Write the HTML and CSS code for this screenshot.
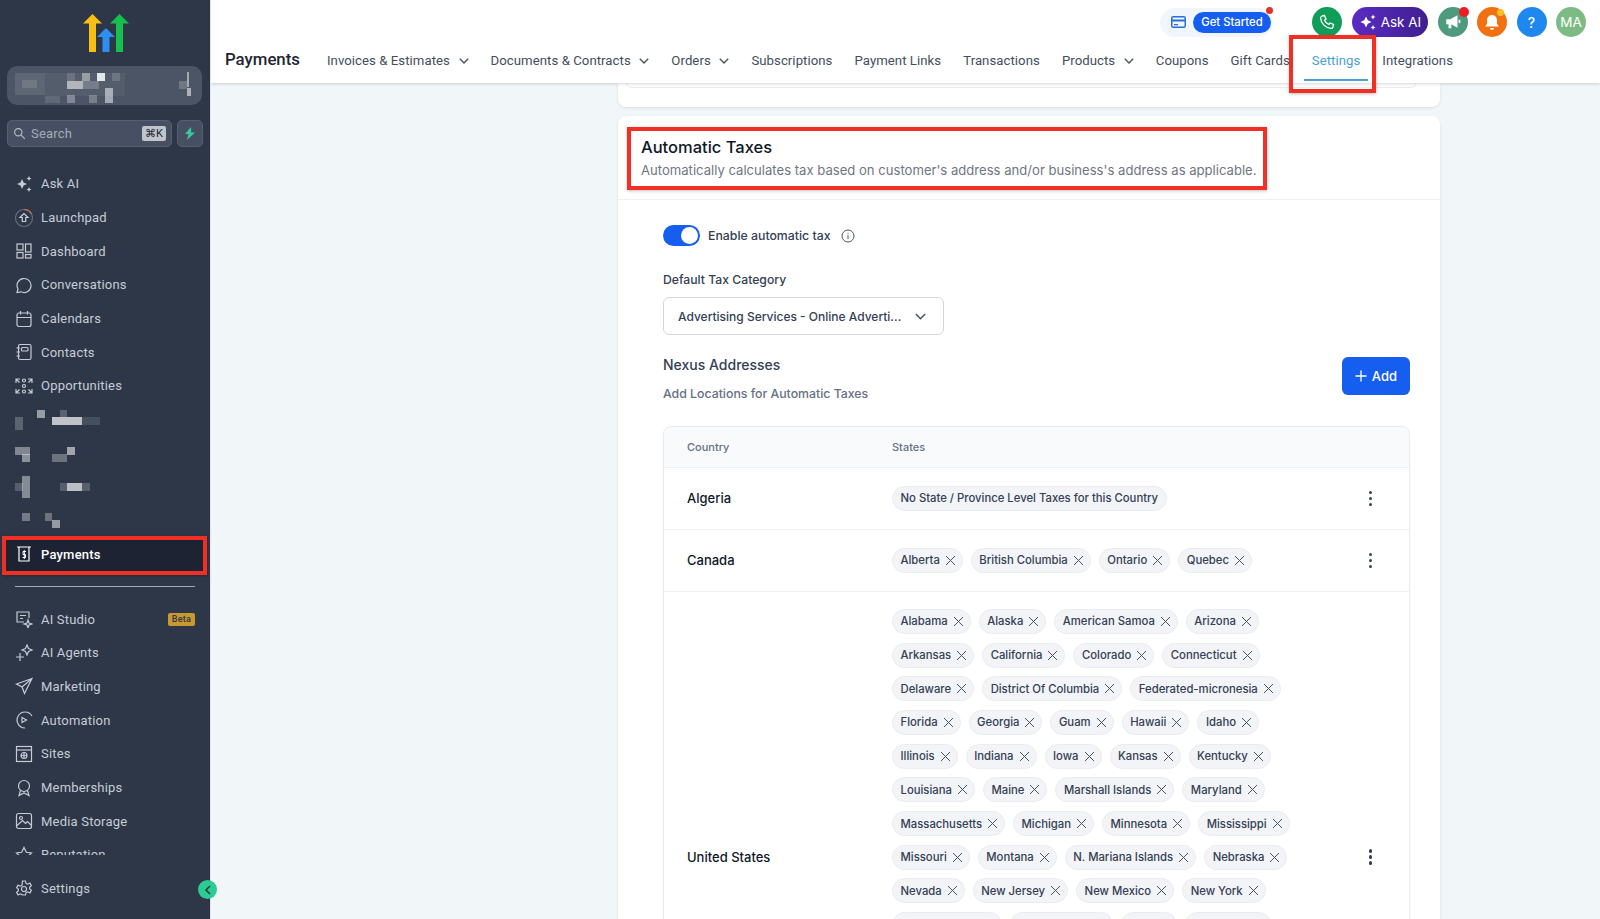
FILE: index.html
```html
<!DOCTYPE html>
<html lang="en">

<head>
  <meta charset="UTF-8">
  <title>Payments - Settings</title>
  <link rel="stylesheet" href="styles.css">
</head>

<body>
  <div class="app">
    <!-- sidebar -->
    <aside class="sidebar">
      <div class="logo">
        <svg width="46" height="38" viewBox="0 0 46 38">
          <polygon fill="#fbbf13" points="0,9.5 9.5,0 19,9.5 13,9.5 13,38 6,38 6,9.5"/>
          <polygon fill="#16c04f" points="27,9.5 36.5,0 46,9.5 40,9.5 40,38 33,38 33,9.5"/>
          <polygon fill="#2d8ff0" points="14,23 23,14 32,23 26.5,23 26.5,38 19.5,38 19.5,23"/>
        </svg>
      </div>

      <div class="account">
        <svg class="pixels" width="195" height="39" viewBox="0 0 195 39">
          <rect x="8" y="7" width="30" height="22" fill="#fff" opacity=".1"/>
          <rect x="15" y="14" width="15" height="8" fill="#fff" opacity=".12"/>
          <rect x="38" y="7" width="80" height="23" fill="#fff" opacity=".05"/>
          <rect x="60" y="7" width="8" height="8" fill="#fff" opacity=".14"/>
          <rect x="60" y="15" width="16" height="8" fill="#fff" opacity=".55"/>
          <rect x="75" y="7" width="8" height="8" fill="#fff" opacity=".4"/>
          <rect x="76" y="15" width="16" height="8" fill="#fff" opacity=".2"/>
          <rect x="90" y="7" width="8" height="8" fill="#fff" opacity=".85"/>
          <rect x="105" y="7" width="8" height="8" fill="#fff" opacity=".15"/>
          <rect x="98" y="22" width="8" height="15" fill="#fff" opacity=".5"/>
          <rect x="60" y="29" width="8" height="8" fill="#fff" opacity=".3"/>
          <rect x="82" y="29" width="8" height="8" fill="#fff" opacity=".25"/>
          <rect x="38" y="30" width="15" height="7" fill="#fff" opacity=".12"/>
          <rect x="172" y="15" width="8" height="8" fill="#fff" opacity=".2"/>
          <rect x="180" y="6" width="2" height="15" fill="#fff" opacity=".5"/>
          <rect x="180" y="22" width="4" height="8" fill="#fff" opacity=".55"/>
        </svg>
      </div>

      <div class="search-row">
        <div class="search">
          <svg class="search-icon" viewBox="0 0 16 16"><circle cx="6.5" cy="6.5" r="4.5"/><path d="M10 10l4.5 4.5"/></svg>
          <span class="search-text">Search</span>
          <span class="kbd">⌘K</span>
        </div>
        <div class="bolt">
          <svg width="12" height="13" viewBox="0 0 12 13"><path fill="#37c99b" d="M7 0L1 7h3.5L3 13l8-7.5H7.2z"/></svg>
        </div>
      </div>

      <ul class="nav">
        <li class="nav-item">
          <svg class="nav-icon filled" viewBox="0 0 18 18"><path d="M7 4l1.6 3.4L12 9 8.6 10.600 7 14l-1.600-3.400L2 9l3.400-1.600z"/><path d="M14 1l.8 1.700 1.700.8-1.700.8L14 6l-.8-1.700-1.700-.8 1.700-.8zM14 12l.8 1.700 1.700.8-1.700.8L14 17l-.8-1.700-1.700-.8 1.700-.8z"/></svg>
          Ask AI
        </li>
        <li class="nav-item">
          <svg class="nav-icon" viewBox="0 0 18 18"><circle class="dim" cx="9" cy="9" r="8.500"/><path class="accent" d="M9 .5a8.500 8.500 0 0 1 7.500 4.500"/><path d="M9 4.500L5 8.500h2.300v4h3.400v-4H13z"/></svg>
          Launchpad
        </li>
        <li class="nav-item">
          <svg class="nav-icon" viewBox="0 0 18 18"><rect x="2" y="2" width="6" height="6"/><rect x="10.500" y="2" width="5.500" height="8"/><rect x="2" y="10.500" width="6" height="5.500"/><rect x="10.500" y="12.500" width="5.500" height="3.500"/></svg>
          Dashboard
        </li>
        <li class="nav-item">
          <svg class="nav-icon" viewBox="0 0 18 18"><path d="M2 16.500l1-3.500a7 7 0 1 1 3 2.800z"/></svg>
          Conversations
        </li>
        <li class="nav-item">
          <svg class="nav-icon" viewBox="0 0 18 18"><rect x="2" y="3" width="14" height="13.500" rx="2"/><path d="M2 7.500h14M5.500 1v3.500M12.500 1v3.500"/></svg>
          Calendars
        </li>
        <li class="nav-item">
          <svg class="nav-icon" viewBox="0 0 18 18"><rect x="3.500" y="1.500" width="12.500" height="15" rx="1.500"/><rect x="6.500" y="4.500" width="6.500" height="3.500" rx="1"/><path d="M1.500 5h3.500M1.500 9h3.500M1.500 13h3.500"/></svg>
          Contacts
        </li>
        <li class="nav-item">
          <svg class="nav-icon" viewBox="0 0 18 18"><circle cx="9" cy="3.500" r="1.500"/><circle cx="9" cy="9" r="1.500"/><circle cx="9" cy="14.500" r="1.500"/><path d="M1 6V2h4M1 2l3.500 3.500M17 6V2h-4M17 2l-3.500 3.500M1 12v4h4M1 16l3.500-3.500M17 12v4h-4M17 16l-3.500-3.500"/></svg>
          Opportunities
        </li>
        <li class="nav-item">
          <svg width="90" height="20" viewBox="0 0 90 20" class="pixel-row">
            <rect x="0" y="7" width="8" height="15" fill="#fff" opacity=".22"/>
            <rect x="22" y="0" width="8" height="8" fill="#fff" opacity=".5"/>
            <rect x="37" y="7" width="30" height="8" fill="#fff" opacity=".7"/>
            <rect x="45" y="0" width="7" height="7" fill="#fff" opacity=".22"/>
            <rect x="67" y="7" width="18" height="8" fill="#fff" opacity=".12"/>
          </svg>
        </li>
        <li class="nav-item">
          <svg width="90" height="20" viewBox="0 0 90 20" class="pixel-row">
            <rect x="0" y="4" width="15" height="8" fill="#fff" opacity=".4"/>
            <rect x="7" y="11" width="8" height="8" fill="#fff" opacity=".45"/>
            <rect x="37" y="11" width="15" height="8" fill="#fff" opacity=".3"/>
            <rect x="52" y="4" width="8" height="8" fill="#fff" opacity=".55"/>
          </svg>
        </li>
        <li class="nav-item">
          <svg width="90" height="24" viewBox="0 0 90 24" class="pixel-row">
            <rect x="0" y="8" width="8" height="8" fill="#fff" opacity=".2"/>
            <rect x="7" y="1" width="8" height="22" fill="#fff" opacity=".42"/>
            <rect x="45" y="8" width="30" height="8" fill="#fff" opacity=".2"/>
            <rect x="52" y="8" width="15" height="8" fill="#fff" opacity=".6"/>
          </svg>
        </li>
        <li class="nav-item">
          <svg width="90" height="20" viewBox="0 0 90 20" class="pixel-row">
            <rect x="7" y="2" width="8" height="8" fill="#fff" opacity=".35"/>
            <rect x="30" y="2" width="7" height="8" fill="#fff" opacity=".3"/>
            <rect x="37" y="9" width="8" height="8" fill="#fff" opacity=".5"/>
          </svg>
        </li>
        <li class="nav-item active">
          <svg class="nav-icon" viewBox="0 0 18 18"><path d="M2 2h14M4 2v14h10V2"/><path class="thin" d="M11 6.500H8v3h2.500v3H7.500M9.300 5v9"/></svg>
          Payments
        </li>
        <li class="nav-divider"></li>
        <li class="nav-item">
          <svg class="nav-icon" viewBox="0 0 18 18"><path d="M9 12H2V2h12v6"/><path d="M5 5.500h6M5 8.500h3"/><path d="M13 10l1 3 3 1-3 1-1 3-1-3-3-1 3-1z"/></svg>
          AI Studio
          <span class="beta">Beta</span>
        </li>
        <li class="nav-item">
          <svg class="nav-icon" viewBox="0 0 18 18"><path d="M12 1l1.500 3.500L17 6l-3.500 1.500L12 11l-1.500-3.500L7 6l3.500-1.500zM5 9v8M1 13h8"/></svg>
          AI Agents
        </li>
        <li class="nav-item">
          <svg class="nav-icon" viewBox="0 0 18 18"><path d="M17 1.500L1.500 7l5.500 3 2.500 6.500zM17 1.500L7 10"/></svg>
          Marketing
        </li>
        <li class="nav-item">
          <svg class="nav-icon" viewBox="0 0 18 18"><path d="M10 17a8 8 0 1 1 7-12"/><path d="M7 6.500v5l4.500-2.500z"/></svg>
          Automation
        </li>
        <li class="nav-item">
          <svg class="nav-icon" viewBox="0 0 18 18"><rect x="1.500" y="1.500" width="15" height="15"/><path d="M1.500 5h15"/><circle cx="9" cy="10.500" r="3"/><path d="M6 10.500h6M9 7.500v6"/></svg>
          Sites
        </li>
        <li class="nav-item">
          <svg class="nav-icon" viewBox="0 0 18 18"><circle cx="9" cy="7" r="5.500"/><path d="M5.500 11.500L4 16.500l5-2.500 5 2.500-1.500-5"/></svg>
          Memberships
        </li>
        <li class="nav-item">
          <svg class="nav-icon" viewBox="0 0 18 18"><rect x="1.500" y="1.500" width="15" height="15" rx="2"/><circle cx="6" cy="6" r="1.500"/><path d="M1.500 14l6-5.500 3 3 2-2 4 4"/></svg>
          Media Storage
        </li>
        <li class="nav-item">
          <svg class="nav-icon" viewBox="0 0 18 18"><path d="M9 1.500l2.300 4.800 5.200.7-3.800 3.600.9 5.200L9 13.300l-4.600 2.500.9-5.200L1.500 7l5.200-.7z"/></svg>
          Reputation
        </li>
      </ul>

      <div class="nav-item nav-bottom">
        <svg class="nav-icon" viewBox="0 0 18 18"><circle cx="9" cy="9" r="2.500"/><path d="M7.500 1h3l.5 2.400 1.700.8 2.200-1.100 1.500 2.600-1.800 1.600v1.400l1.800 1.600-1.500 2.600-2.200-1.100-1.700.8-.5 2.400h-3L7 14.600l-1.700-.8-2.200 1.100-1.500-2.600 1.800-1.600V9.300L1.600 7.700l1.500-2.600 2.200 1.100L7 5.400z"/></svg>
        Settings
      </div>
      <div class="collapse-btn">
        <svg width="8" height="10" viewBox="0 0 8 10"><path d="M6 1L2 5l4 4" fill="none" stroke="#1f3a36" stroke-width="1.500"/></svg>
      </div>
      <div class="mark mark-payments"></div>
    </aside>

    <div class="page">
      <!-- header -->
      <header class="header">
        <div class="topbar">
          <div class="get-started">
            <svg width="15" height="12" viewBox="0 0 15 12"><rect x=".75" y=".75" width="13.500" height="10.500" rx="1.500" fill="none" stroke="#2b6fd8" stroke-width="1.500"/><rect x="1" y="3.500" width="13" height="2" fill="#2b6fd8"/><rect x="3" y="8" width="4" height="1.300" fill="#2b6fd8"/></svg>
            <span class="get-started-btn">Get Started</span>
            <span class="dot-red"></span>
          </div>
          <span class="circle phone">
            <svg width="16" height="16" viewBox="0 0 16 16"><path d="M3 2l2.500-.5L7 5 5.500 6.200a8 8 0 0 0 4.300 4.300L11 9l3.500 1.500L14 13c-.3 1-1.200 1.500-2 1.400C6.500 14 2 9.500 1.600 4c0-.9.500-1.700 1.400-2z" fill="none" stroke="#fff" stroke-width="1.300"/></svg>
          </span>
          <span class="ask-ai">
            <svg width="18" height="18" viewBox="0 0 18 18"><path fill="#fff" d="M7 3.500l1.800 3.700L12.500 9l-3.700 1.800L7 14.500l-1.800-3.700L1.500 9l3.700-1.800zM14 1.500l.8 1.700 1.700.8-1.700.8-.8 1.700-.8-1.700-1.700-.8 1.700-.8zM14 12l.8 1.700 1.700.8-1.700.8-.8 1.700-.8-1.700-1.700-.8 1.700-.8z"/></svg>
            Ask AI
          </span>
          <span class="circle megaphone">
            <svg width="18" height="18" viewBox="0 0 16 16"><path fill="#fff" d="M2 5.500h3.500l6.500-3.500v11L6.500 10v3.500H4V10H2z"/><rect x="13" y="6" width="1.500" height="3" fill="#fff"/></svg>
            <span class="dot-badge"></span>
          </span>
          <span class="circle bell">
            <svg width="16" height="17" viewBox="0 0 16 17"><path fill="#fff" d="M8 1a5 5 0 0 1 5 5v4l2 2.500H1L3 10V6a5 5 0 0 1 5-5zM6 14h4a2 2 0 0 1-4 0z"/></svg>
            <span class="dot-amber"></span>
          </span>
          <span class="circle help">?</span>
          <span class="circle avatar">MA</span>
        </div>
        <div class="tabs-row">
          <h1 class="title">Payments</h1>
          <nav class="tabs">
            <a class="tab">Invoices &amp; Estimates <svg class="caret" viewBox="0 0 10 6"><path d="M.8.8L5 5 9.200.8"/></svg></a>
            <a class="tab">Documents &amp; Contracts <svg class="caret" viewBox="0 0 10 6"><path d="M.8.8L5 5 9.200.8"/></svg></a>
            <a class="tab">Orders <svg class="caret" viewBox="0 0 10 6"><path d="M.8.8L5 5 9.200.8"/></svg></a>
            <a class="tab">Subscriptions</a>
            <a class="tab">Payment Links</a>
            <a class="tab">Transactions</a>
            <a class="tab">Products <svg class="caret" viewBox="0 0 10 6"><path d="M.8.8L5 5 9.200.8"/></svg></a>
            <a class="tab">Coupons</a>
            <a class="tab">Gift Cards</a>
            <a class="tab current">Settings</a>
            <a class="tab">Integrations</a>
          </nav>
        </div>
        <div class="mark mark-settings"></div>
      </header>

      <!-- content -->
      <main class="content">
        <div class="card card-prev">
          <div class="card-prev-inner"></div>
        </div>

        <section class="card">
          <div class="card-head">
            <h2>Automatic Taxes</h2>
            <p>Automatically calculates tax based on customer's address and/or business's address as applicable.</p>
            <div class="mark mark-taxes"></div>
          </div>

          <div class="card-body">
            <div class="toggle-row">
              <span class="toggle"><span class="knob"></span></span>
              <span class="toggle-label">Enable automatic tax</span>
              <svg class="info" viewBox="0 0 14 14"><circle cx="7" cy="7" r="6"/><path d="M7 6.200v4M7 3.800v1"/></svg>
            </div>

            <label class="field-label">Default Tax Category</label>
            <div class="select">
              <span>Advertising Services - Online Adverti...</span>
              <svg class="select-caret" viewBox="0 0 10 6"><path d="M.8.8L5 5 9.200.8"/></svg>
            </div>

            <div class="nexus-head">
              <div>
                <h3>Nexus Addresses</h3>
                <p>Add Locations for Automatic Taxes</p>
              </div>
              <button class="add-btn">
                <svg width="12" height="12" viewBox="0 0 12 12"><path d="M6 .5v11M.5 6h11" stroke="#fff" stroke-width="1.300"/></svg>
                Add
              </button>
            </div>

            <div class="table">
              <div class="table-row table-head">
                <div>Country</div>
                <div>States</div>
                <div></div>
              </div>
              <div class="table-row">
                <div class="country">Algeria</div>
                <div class="chips">
                  <span class="chip">No State / Province Level Taxes for this Country</span>
                </div>
                <div class="kebab"><i></i><i></i><i></i></div>
              </div>
              <div class="table-row">
                <div class="country">Canada</div>
                <div class="chips">
                  <span class="chip x">Alberta</span>
                  <span class="chip x">British Columbia</span>
                  <span class="chip x">Ontario</span>
                  <span class="chip x">Quebec</span>
                </div>
                <div class="kebab"><i></i><i></i><i></i></div>
              </div>
              <div class="table-row row-long">
                <div class="country">United States</div>
                <div class="chips">
                  <span class="chip x">Alabama</span>
                  <span class="chip x">Alaska</span>
                  <span class="chip x">American Samoa</span>
                  <span class="chip x">Arizona</span>
                  <span class="chip x">Arkansas</span>
                  <span class="chip x">California</span>
                  <span class="chip x">Colorado</span>
                  <span class="chip x">Connecticut</span>
                  <span class="chip x">Delaware</span>
                  <span class="chip x">District Of Columbia</span>
                  <span class="chip x">Federated-micronesia</span>
                  <span class="chip x">Florida</span>
                  <span class="chip x">Georgia</span>
                  <span class="chip x">Guam</span>
                  <span class="chip x">Hawaii</span>
                  <span class="chip x">Idaho</span>
                  <span class="chip x">Illinois</span>
                  <span class="chip x">Indiana</span>
                  <span class="chip x">Iowa</span>
                  <span class="chip x">Kansas</span>
                  <span class="chip x">Kentucky</span>
                  <span class="chip x">Louisiana</span>
                  <span class="chip x">Maine</span>
                  <span class="chip x">Marshall Islands</span>
                  <span class="chip x">Maryland</span>
                  <span class="chip x">Massachusetts</span>
                  <span class="chip x">Michigan</span>
                  <span class="chip x">Minnesota</span>
                  <span class="chip x">Mississippi</span>
                  <span class="chip x">Missouri</span>
                  <span class="chip x">Montana</span>
                  <span class="chip x">N. Mariana Islands</span>
                  <span class="chip x">Nebraska</span>
                  <span class="chip x">Nevada</span>
                  <span class="chip x">New Jersey</span>
                  <span class="chip x">New Mexico</span>
                  <span class="chip x">New York</span>
                  <span class="chip x">North Carolina</span>
                  <span class="chip x">North Dakota</span>
                  <span class="chip x">Ohio</span>
                  <span class="chip x">Oklahoma</span>
                  <span class="chip x">Oregon</span>
                  <span class="chip x">Palau</span>
                  <span class="chip x">Pennsylvania</span>
                  <span class="chip x">Puerto Rico</span>
                  <span class="chip x">Rhode Island</span>
                  <span class="chip x">South Carolina</span>
                  <span class="chip x">South Dakota</span>
                  <span class="chip x">Tennessee</span>
                  <span class="chip x">Texas</span>
                  <span class="chip x">Utah</span>
                  <span class="chip x">Vermont</span>
                  <span class="chip x">Virgin Island</span>
                  <span class="chip x">Virginia</span>
                  <span class="chip x">Washington</span>
                  <span class="chip x">West Virginia</span>
                  <span class="chip x">Wisconsin</span>
                  <span class="chip x">Wyoming</span>
                </div>
                <div class="kebab"><i></i><i></i><i></i></div>
              </div>
            </div>
          </div>
        </section>
      </main>
    </div>
  </div>
</body>

</html>
```

FILE: styles.css
```css
* {
  box-sizing: border-box;
}

body {
  margin: 0;
  font-family: Inter, "Liberation Sans", sans-serif;
  background-color: #f1f6f9;
  overflow: hidden;
}

.app {
  display: flex;
  height: 919px;
  overflow: hidden;
}

/* sidebar */
.sidebar {
  position: relative;
  z-index: 5;
  flex: 0 0 210px;
  background-color: #2d3748;
  border-right: 1px solid #dfe4ea;
  color: #c6ccd6;
  font-family: Roboto, "Liberation Sans", sans-serif;
  font-size: 13px;
  font-weight: 400;
  letter-spacing: .2px;
}

.logo {
  display: flex;
  justify-content: center;
  height: 66px;
  padding: 14px 0 0 1px;
}

.account {
  height: 39px;
  margin: 0 8px 0 7px;
  border-radius: 10px;
  background-color: #4b5565;
  overflow: hidden;
}

.pixels {
  display: block;
}

.search-row {
  display: flex;
  gap: 5px;
  margin: 15px 7px 0 7px;
}

.search {
  flex: 1;
  height: 27px;
  display: flex;
  align-items: center;
  padding: 0 5px;
  border: 1px solid #566072;
  border-radius: 5px;
  background-color: #465062;
}

.search-icon {
  width: 13px;
  height: 13px;
  margin-right: 5px;
  fill: none;
  stroke: #b9c0cb;
  stroke-width: 1.4;
}

.search-text {
  flex: 1;
  color: #a3abb8;
}

.kbd {
  padding: 1px 3px;
  border-radius: 2px;
  background-color: #c0c5cd;
  color: #1f2633;
  font-size: 11px;
  line-height: 13px;
}

.bolt {
  width: 26px;
  height: 27px;
  display: flex;
  align-items: center;
  justify-content: center;
  border-radius: 5px;
  border: 1px solid #566072;
  background-color: #465062;
}

.nav {
  list-style-type: none;
  margin: 20px 0 17px 0;
  padding: 0;
  height: 688px;
  overflow: hidden;
}

.nav-item {
  display: flex;
  align-items: center;
  height: 33.7px;
  padding-left: 15px;
  white-space: nowrap;
}

.nav-icon {
  flex: 0 0 18px;
  width: 18px;
  height: 18px;
  margin-right: 8px;
  fill: none;
  stroke: #c6ccd6;
  stroke-width: 1.2;
}

.nav-icon.filled {
  fill: #c6ccd6;
  stroke: none;
}

.nav-icon .dim {
  stroke: #5f6979;
}

.nav-icon .accent {
  stroke: #c8794a;
}

.nav-icon .thin {
  stroke-width: 1;
}

.pixel-row {
  display: block;
}

.nav-item.active {
  margin: 0 6px 0 5px;
  padding-left: 10px;
  background-color: #1e2333;
  color: #fff;
  font-weight: 500;
}

.nav-item.active .nav-icon {
  stroke: #fff;
}

.nav-divider {
  height: 1.5px;
  margin: 14.5px 15px 15px 15px;
  background-color: #a2a9b5;
}

.beta {
  margin-left: auto;
  margin-right: 15px;
  padding: 0 4px;
  border-radius: 2px;
  background-color: #c9992f;
  color: #2d3748;
  font-size: 9px;
  font-weight: 500;
  line-height: 13px;
}

.collapse-btn {
  position: absolute;
  left: 198px;
  top: 880px;
  width: 19px;
  height: 19px;
  display: flex;
  align-items: center;
  justify-content: center;
  border-radius: 50%;
  background-color: #2bcb92;
}

/* header */
.page {
  flex: 1;
  min-width: 0;
  display: flex;
  flex-direction: column;
}

.header {
  position: relative;
  z-index: 3;
  flex: 0 0 83px;
  background-color: #fff;
  box-shadow: 0 1px 3px rgba(0, 0, 0, .16);
}

.topbar {
  display: flex;
  align-items: center;
  justify-content: flex-end;
  height: 44px;
  padding-right: 14px;
  gap: 9.5px;
}

.get-started {
  position: relative;
  display: flex;
  align-items: center;
  gap: 7px;
  width: 113px;
  height: 29px;
  margin-right: 29.5px;
  padding-left: 11px;
  border-radius: 15px;
  background-color: #f1f6fd;
}

.get-started-btn {
  padding: 0 8px;
  border-radius: 11px;
  background-color: #155eef;
  color: #fff;
  font-size: 11.3px;
  font-weight: 500;
  line-height: 21px;
  white-space: nowrap;
}

.dot-red {
  position: absolute;
  right: 0;
  top: -1px;
  width: 7px;
  height: 7px;
  border-radius: 50%;
  background-color: #e0352b;
}

.circle {
  position: relative;
  flex: 0 0 30px;
  width: 30px;
  height: 30px;
  display: flex;
  align-items: center;
  justify-content: center;
  border-radius: 50%;
  color: #fff;
  font-size: 14px;
}

.phone {
  background-color: #0f9d58;
}

.megaphone {
  background-color: #4e9a7e;
}

.bell {
  background-color: #f2700f;
}

.help {
  background-color: #1e88f0;
  font-weight: 500;
}

.avatar {
  background-color: #7dbb85;
  font-size: 13.5px;
}

.dot-badge {
  position: absolute;
  right: -1px;
  top: 0;
  width: 10px;
  height: 10px;
  border-radius: 50%;
  background-color: #ef1c25;
}

.dot-amber {
  position: absolute;
  right: 3px;
  top: 2px;
  width: 7px;
  height: 7px;
  border-radius: 50%;
  background-color: #fbbf24;
}

.ask-ai {
  display: flex;
  align-items: center;
  gap: 4px;
  height: 30px;
  padding: 0 7px;
  border-radius: 15px;
  background: linear-gradient(90deg, #5b2bc4, #3e1f8f);
  color: #fff;
  font-size: 13.4px;
  white-space: nowrap;
}

.tabs-row {
  display: flex;
  align-items: center;
  height: 39px;
  padding: 0 0 6px 14px;
}

.title {
  margin: 0 27px 4px 0;
  color: #1f2633;
  font-family: Roboto, "Liberation Sans", sans-serif;
  font-size: 16.8px;
  font-weight: 500;
}

.tabs {
  display: flex;
  align-items: center;
  gap: 22px;
  font-family: Roboto, "Liberation Sans", sans-serif;
  font-size: 13.2px;
  font-weight: 400;
  letter-spacing: .05px;
  color: #444e5d;
  white-space: nowrap;
}

.tab {
  display: flex;
  align-items: center;
  gap: 8.6px;
}

.tab.current {
  color: #4a9fd4;
}

.caret,
.select-caret {
  width: 10px;
  height: 6px;
  fill: none;
  stroke: #4a5463;
  stroke-width: 1.4;
}

/* red review boxes over the screenshot */
.mark {
  position: absolute;
  border: 4px solid #f03024;
  box-shadow: 0 1px 3px rgba(0, 0, 0, .25);
  pointer-events: none;
}

.mark-settings {
  left: 1078px;
  top: 35px;
  width: 87px;
  height: 58px;
}

.mark-taxes {
  left: 9px;
  top: 11px;
  width: 640px;
  height: 63px;
}

.mark-payments {
  left: 2px;
  top: 536px;
  width: 205px;
  height: 39px;
}

.tab.current::after {
  content: "";
  position: absolute;
  left: 1093px;
  top: 78.5px;
  width: 64px;
  height: 2px;
  background-color: #4a9fd4;
}

/* content */
.content {
  flex: 1;
  min-height: 0;
  overflow: hidden;
  padding-left: 407px;
}

.card {
  width: 822px;
  background-color: #fff;
  border-radius: 8px;
  box-shadow: 0 1px 3px rgba(0, 0, 0, .1);
}

.card-prev {
  height: 24px;
  padding: 0 24px 0 8px;
  border-radius: 0 0 8px 8px;
  margin-bottom: 9px;
}

.card-prev-inner {
  height: 5px;
  border: 1px solid #e8ebef;
  border-top: none;
  border-radius: 0 0 8px 8px;
}

.card-head {
  position: relative;
  height: 84px;
  padding: 21px 0 0 23px;
  border-bottom: 1px solid #eef0f3;
}

.card-head h2 {
  margin: 0;
  color: #101828;
  font-size: 16.5px;
  font-weight: 500;
  line-height: 20px;
}

.card-head p {
  margin: 4px 0 0 0;
  color: #6f7682;
  font-size: 13.1px;
  line-height: 18px;
}

.card-body {
  padding: 25px 30px 0 45px;
}

.toggle-row {
  display: flex;
  align-items: center;
  height: 21px;
}

.toggle {
  display: flex;
  justify-content: flex-end;
  align-items: center;
  width: 37px;
  height: 21px;
  padding-right: 2px;
  border-radius: 11px;
  background-color: #155eef;
}

.knob {
  width: 17px;
  height: 17px;
  border-radius: 50%;
  background-color: #fff;
}

.toggle-label {
  margin: 0 10px 0 8px;
  color: #344054;
  font-size: 12.3px;
  font-weight: 500;
}

.info {
  width: 14px;
  height: 14px;
  fill: none;
  stroke: #4a5463;
  stroke-width: 1;
}

.field-label {
  display: block;
  margin-top: 24px;
  color: #344054;
  font-size: 12.2px;
  font-weight: 500;
  line-height: 20px;
}

.select {
  display: flex;
  align-items: center;
  justify-content: space-between;
  width: 281px;
  height: 38px;
  margin-top: 7px;
  padding: 0 14px;
  border: 1px solid #d0d5dd;
  border-radius: 6px;
  color: #344054;
  font-size: 12px;
  font-weight: 500;
  white-space: nowrap;
}

.select-caret {
  width: 11px;
  height: 7px;
  margin-right: 3px;
}

.nexus-head {
  display: flex;
  justify-content: space-between;
  align-items: flex-start;
  margin-top: 19.5px;
}

.nexus-head h3 {
  margin: 0;
  color: #344054;
  font-size: 14px;
  font-weight: 500;
  line-height: 20px;
}

.nexus-head p {
  margin: 10px 0 0 0;
  color: #667085;
  font-size: 12.3px;
  font-weight: 500;
  line-height: 18px;
}

.add-btn {
  display: flex;
  align-items: center;
  gap: 5px;
  height: 38px;
  margin-top: 2.5px;
  padding: 0 13px;
  border: none;
  border-radius: 6px;
  background-color: #155eef;
  color: #fff;
  font-family: inherit;
  font-size: 13px;
  font-weight: 500;
}

.table {
  margin-top: 23.4px;
  border: 1px solid #e8ebef;
  border-radius: 8px;
  box-shadow: 0 1px 2px rgba(0, 0, 0, .05);
}

.table-row {
  display: grid;
  grid-template-columns: 228px 425px 1fr;
  align-items: center;
  padding: 18px 0;
  border-top: 1px solid #eef0f3;
}

.table-head {
  height: 40px;
  padding: 0;
  border-top: none;
  border-radius: 8px 8px 0 0;
  background-color: #f9fafb;
  color: #667085;
  font-size: 11px;
  font-weight: 500;
}

.table-head > div:first-child,
.country {
  padding-left: 23px;
}

.country {
  color: #101828;
  font-size: 13px;
  font-weight: 500;
}

.chips {
  display: flex;
  flex-wrap: wrap;
  gap: 8.7px 8px;
}

.row-long {
  padding-top: 17px;
}

.chip {
  display: inline-flex;
  align-items: center;
  height: 25px;
  padding: 0 7.5px;
  border: 1px solid #eaecf0;
  border-radius: 13px;
  background-color: #f2f4f7;
  color: #344054;
  font-size: 11.3px;
  font-weight: 500;
  white-space: nowrap;
}

.chip.x {
  padding-right: 7px;
}

.chip.x::after {
  content: "";
  width: 9px;
  height: 9px;
  margin-left: 6px;
  background:
    linear-gradient(45deg, transparent 46%, #475467 46%, #475467 54%, transparent 54%),
    linear-gradient(-45deg, transparent 46%, #475467 46%, #475467 54%, transparent 54%);
}

.kebab {
  display: flex;
  flex-direction: column;
  align-items: center;
  gap: 2.5px;
  justify-self: end;
  width: 3.5px;
  margin-right: 37px;
}

.kebab i {
  width: 3.5px;
  height: 3.5px;
  border-radius: 50%;
  background-color: #344054;
}
```
